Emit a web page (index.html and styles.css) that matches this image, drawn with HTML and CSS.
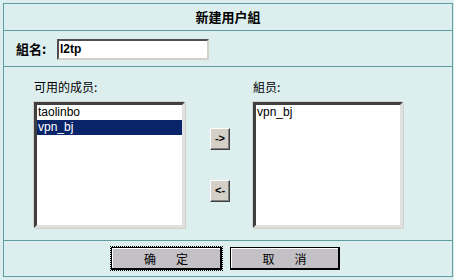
FILE: index.html
```html
<!DOCTYPE html>
<html>
<head>
<meta charset="utf-8">
<link rel="stylesheet" href="styles.css">
</head>
<body>
<div class="panel">
  <div class="row title">新建用户組</div>
  <div class="row name-row">
    <span class="name-label">組名:</span>
    <div class="text-input">l2tp</div>
  </div>
  <div class="row members">
    <div class="col-label">可用的成员:</div>
    <div></div>
    <div class="col-label">組员:</div>
    <div class="listbox">
      <div class="item">taolinbo</div>
      <div class="item selected">vpn_bj</div>
    </div>
    <div class="move">
      <div class="small-btn">-&gt;</div>
      <div class="small-btn">&lt;-</div>
    </div>
    <div class="listbox">
      <div class="item">vpn_bj</div>
    </div>
  </div>
  <div class="row actions">
    <div class="btn default"><span>确</span><span>定</span></div>
    <div class="btn"><span>取</span><span>消</span></div>
  </div>
</div>
</body>
</html>
```

FILE: styles.css
```css
* { box-sizing: border-box; }
html, body { margin: 0; padding: 0; background: #dcefee; }
body {
  font-family: "Liberation Sans", "Noto Sans CJK SC", sans-serif;
  font-size: 12px;
  color: #000;
}
.panel {
  margin: 3px 0 0 3px;
  width: 450px;
  border: 1px solid #5f9ea0;
  background: #dcefee;
}
.row { border-top: 1px solid #5f9ea0; }
.row:first-child { border-top: 0; }
.title {
  height: 26px;
  line-height: 26px;
  text-align: center;
  font-weight: bold;
  font-size: 13px;
  font-family: "Noto Sans CJK SC", sans-serif;
}
.name-row {
  height: 36px;
  display: flex;
  align-items: center;
  padding-left: 12px;
}
.name-label {
  font-weight: bold;
  font-size: 13px;
  font-family: "Noto Sans CJK SC", sans-serif;
  width: 41px;
}
.text-input {
  width: 152px;
  height: 21px;
  margin-top: 1px;
  background: #fff;
  border: 2px solid;
  border-color: #505050 #d4d0c8 #d4d0c8 #505050;
  font-weight: bold;
  font-size: 12px;
  line-height: 17px;
  padding-left: 1px;
}
.members {
  height: 174px;
  display: grid;
  grid-template-columns: 151px 68px 150px;
  grid-template-rows: 35px 126px;
  padding: 0 0 0 30px;
}
.col-label {
  font-family: "Noto Sans CJK SC", sans-serif;
  font-size: 12px;
  padding-top: 14px;
  line-height: 12px;
}
.listbox {
  background: #fff;
  border: 3px solid;
  border-color: #404040 #e0e0e0 #e0e0e0 #404040;
  box-shadow: -1px -1px 0 #d4d0c8, 1px 1px 0 #d4d0c8;
  padding-top: 0;
}
.item {
  height: 15px;
  line-height: 15px;
  padding-left: 1px;
  white-space: nowrap;
}
.item.selected { background: #0a246a; color: #fff; }
.move {
  display: flex;
  flex-direction: column;
  align-items: flex-start;
  gap: 30px;
  padding: 26px 0 0 25px;
}
.small-btn {
  width: 20px;
  height: 22px;
  background: #d4d0c8;
  border: 1px solid;
  border-color: #fff #404040 #404040 #fff;
  box-shadow: inset -1px -1px 0 #808080;
  font-weight: bold;
  font-size: 11px;
  line-height: 19px;
  text-align: center;
}
.actions {
  height: 36px;
  display: flex;
  align-items: center;
  gap: 8px;
  padding-left: 106px;
}
.btn {
  width: 110px;
  height: 23px;
  background: #c3c1c5;
  border: 1px solid #000;
  border-right-width: 2px;
  border-bottom-width: 2px;
  box-shadow: inset 1px 1px 0 #fff;
  display: flex;
  justify-content: center;
  align-items: center;
  gap: 20px;
  font-family: "Noto Sans CJK SC", sans-serif;
  font-size: 12px;
}
.btn.default {
  width: 111px;
  outline: 1px dotted #000;
  margin-left: 1px;
}
```
